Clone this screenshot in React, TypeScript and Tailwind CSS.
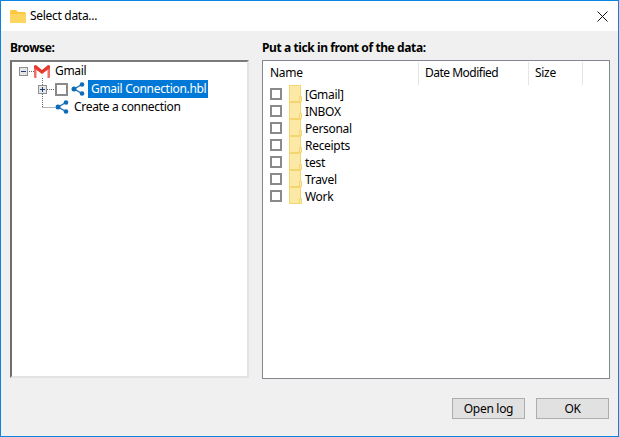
const FOLDERS = ["[Gmail]", "INBOX", "Personal", "Receipts", "test", "Travel", "Work"];

function ShareIcon() {
  return (
    <svg width="14" height="14" viewBox="0 0 14 14" className="shrink-0">
      <path d="M11 2.5 L3 7 L11 11.5" fill="none" stroke="#1a6fb5" strokeWidth="1.4" />
      <circle cx="11" cy="2.5" r="2.3" fill="#0f6cb8" />
      <circle cx="3" cy="7" r="2.5" fill="#0f6cb8" />
      <circle cx="11" cy="11.5" r="2.3" fill="#0f6cb8" />
    </svg>
  );
}

function GmailIcon() {
  return (
    <svg width="16" height="13" viewBox="0 0 16 13" className="shrink-0">
      <path d="M0 1 H2.5 V13 H1 Q0 13 0 12 Z" fill="#ef6f66" />
      <path d="M16 1 H13.5 V13 H15 Q16 13 16 12 Z" fill="#ef6f66" />
      <path d="M0 1 Q0.5 0 2 0 L8 5 L14 0 Q15.5 0 16 1 V3 L8 9 L0 3 Z" fill="#e8392e" />
    </svg>
  );
}

function Expander({ sign }: { sign: "plus" | "minus" }) {
  return (
    <div className="relative w-[9px] h-[9px] shrink-0 bg-[#e6e6e6] border border-[#8e8f8f]">
      <div className="absolute left-[1px] right-[1px] top-[3px] h-px bg-[#1c3f7a]" />
      {sign === "plus" && <div className="absolute top-[1px] bottom-[1px] left-[3px] w-px bg-[#1c3f7a]" />}
    </div>
  );
}

function FileFolder() {
  return (
    <svg width="13" height="17" viewBox="0 0 13 17" className="shrink-0">
      <rect x="0.5" y="0.5" width="11" height="16" fill="#fde9a6" stroke="#f3d670" />
      <path d="M10.5 16.5 V11.5 H12.5 V16.5 Z" fill="#fde9a6" stroke="#f3d670" />
    </svg>
  );
}

export default function App() {
  return (
    <div className="w-[619px] h-[437px] flex flex-col bg-[#f0f0f0] border border-[#0a84e0] overflow-hidden text-[12px] tracking-[-0.3px] text-black whitespace-nowrap" style={{ fontFamily: '"Noto Sans", sans-serif' }}>
      {/* Title bar */}
      <div className="h-[30px] bg-white flex items-center pl-[9px] pr-[10px] shrink-0">
        <svg width="16" height="13" viewBox="0 0 16 13" className="shrink-0">
          <path d="M0 1.5 Q0 0 1.5 0 H6 L8 2 H14.5 Q16 2 16 3.5 V11.5 Q16 13 14.5 13 H1.5 Q0 13 0 11.5 Z" fill="#fcc93f" />
          <path d="M0 4 H16 V11.5 Q16 13 14.5 13 H1.5 Q0 13 0 11.5 Z" fill="#fdd660" />
        </svg>
        <span className="ml-[4px]">Select data...</span>
        <svg width="11" height="11" viewBox="0 0 11 11" className="ml-auto">
          <path d="M0.5 0.5 L10.5 10.5 M10.5 0.5 L0.5 10.5" stroke="#111" strokeWidth="1" />
        </svg>
      </div>

      {/* Panels */}
      <div className="flex-1 flex pl-[9px] pr-[8px] pt-[8px] gap-[13px]">
        <div className="w-[239px] flex flex-col">
          <div className="h-[21px] font-bold leading-[17px] tracking-[-0.4px]">Browse:</div>
          <div className="relative h-[318px] bg-white border-t-2 border-l-2 border-t-[#7a7a7a] border-l-[#6e6e6e] border-r-2 border-b-2 border-r-[#e3e3e3] border-b-[#e3e3e3]">
            {/* tree connectors */}
            <svg width="60" height="60" className="absolute left-0 top-0">
              <path d="M15 9.5 H22 M30.5 16 V45.5 M30.5 45.5 H43 M35 27.5 H43" stroke="#666" strokeWidth="1" strokeDasharray="1 1" fill="none" />
            </svg>
            <div className="relative flex flex-col">
              <div className="h-[18px] flex items-center pl-[7px]">
                <Expander sign="minus" />
                <div className="ml-[6px]"><GmailIcon /></div>
                <span className="ml-[5px]">Gmail</span>
              </div>
              <div className="h-[18px] flex items-center pl-[26px]">
                <Expander sign="plus" />
                <div className="ml-[8px] w-[13px] h-[13px] border-2 border-[#8a8a8a] bg-white shrink-0" />
                <div className="ml-[3px]"><ShareIcon /></div>
                <span className="ml-[3px] h-[18px] w-[120px] bg-[#0078d7] text-white pl-[3px] leading-[18px]">Gmail Connection.hbl</span>
              </div>
              <div className="h-[18px] flex items-center pl-[43px]">
                <ShareIcon />
                <span className="ml-[5px]">Create a connection</span>
              </div>
            </div>
          </div>
        </div>

        <div className="flex-1 flex flex-col">
          <div className="h-[21px] font-bold leading-[17px] tracking-[-0.4px]">Put a tick in front of the data:</div>
          <div className="h-[319px] bg-white border border-[#828790]">
            <div className="flex h-[23px] mt-px leading-[21px]">
              <div className="w-[156px] pl-[7px] border-r border-[#e5e5e5]">Name</div>
              <div className="w-[110px] pl-[6px] border-r border-[#e5e5e5] tracking-[-0.5px]">Date Modified</div>
              <div className="w-[54px] pl-[6px] border-r border-[#e5e5e5]">Size</div>
            </div>
            {FOLDERS.map((name) => (
              <div key={name} className="h-[17px] flex items-center pl-[7px]">
                <div className="w-[12px] h-[12px] border-2 border-[#8a8a8a] bg-white shrink-0" />
                <div className="ml-[7px]"><FileFolder /></div>
                <span className="ml-[3px] pt-[2px]">{name}</span>
              </div>
            ))}
          </div>
        </div>
      </div>

      {/* Buttons */}
      <div className="flex justify-end gap-[11px] pr-[9px] pb-[17px]">
        <button className="w-[73px] h-[21px] bg-[#e1e1e1] border border-[#adadad]">Open log</button>
        <button className="w-[73px] h-[21px] bg-[#e1e1e1] border border-[#adadad]">OK</button>
      </div>
    </div>
  );
}
